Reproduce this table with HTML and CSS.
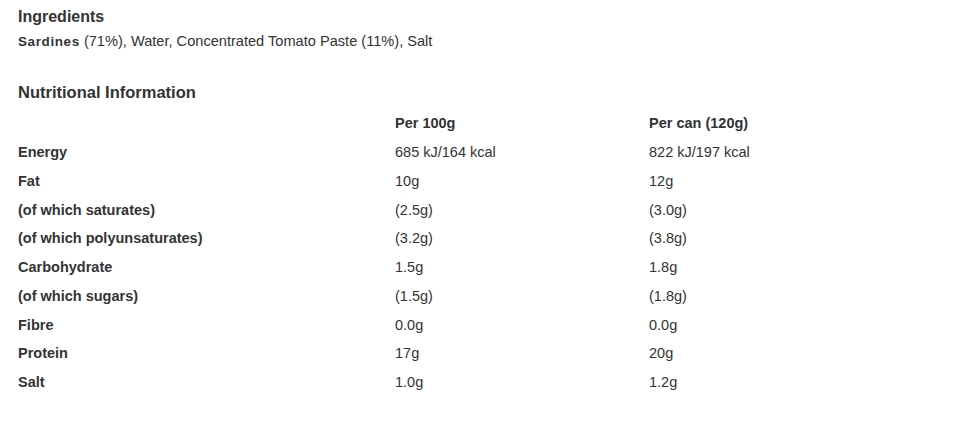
FILE: index.html
```html
<!DOCTYPE html>
<html>
<head>
<meta charset="utf-8">
<link rel="stylesheet" href="styles.css">
</head>
<body>
<section class="info">
  <h2 class="heading">Ingredients</h2>
  <p class="ingredients"><b class="allergen">Sardines</b> (71%), Water, Concentrated Tomato Paste (11%), Salt</p>
  <h2 class="heading heading-nutrition">Nutritional Information</h2>
  <div class="table">
    <div class="row head"><span></span><span>Per 100g</span><span>Per can (120g)</span></div>
    <div class="row"><span class="label">Energy</span><span>685 kJ/164 kcal</span><span>822 kJ/197 kcal</span></div>
    <div class="row"><span class="label">Fat</span><span>10g</span><span>12g</span></div>
    <div class="row"><span class="label">(of which saturates)</span><span>(2.5g)</span><span>(3.0g)</span></div>
    <div class="row"><span class="label">(of which polyunsaturates)</span><span>(3.2g)</span><span>(3.8g)</span></div>
    <div class="row"><span class="label">Carbohydrate</span><span>1.5g</span><span>1.8g</span></div>
    <div class="row"><span class="label">(of which sugars)</span><span>(1.5g)</span><span>(1.8g)</span></div>
    <div class="row"><span class="label">Fibre</span><span>0.0g</span><span>0.0g</span></div>
    <div class="row"><span class="label">Protein</span><span>17g</span><span>20g</span></div>
    <div class="row"><span class="label">Salt</span><span>1.0g</span><span>1.2g</span></div>
  </div>
</section>
</body>
</html>
```
FILE: styles.css
```css
html, body {
  margin: 0;
  padding: 0;
  background: #ffffff;
}
body {
  font-family: "Liberation Sans", Arial, sans-serif;
  color: #333333;
}
.info {
  padding: 7px 18px 0 18px;
}
.heading {
  margin: 0;
  font-size: 16px;
  font-weight: bold;
  line-height: 20px;
}
.heading-nutrition {
  font-size: 16.5px;
  margin-top: 30px;
}
.ingredients {
  margin: 4px 0 0 0;
  font-size: 14.6px;
  line-height: 20px;
}
.allergen {
  font-weight: bold;
  letter-spacing: 0.6px;
  font-size: 13.5px;
}
.table {
  margin-top: 7px;
  font-size: 14.5px;
}
.row {
  display: grid;
  grid-template-columns: 377px 254px 1fr;
  height: 28.75px;
  align-items: center;
}
.head {
  font-weight: bold;
}
.label {
  font-weight: bold;
}
```
